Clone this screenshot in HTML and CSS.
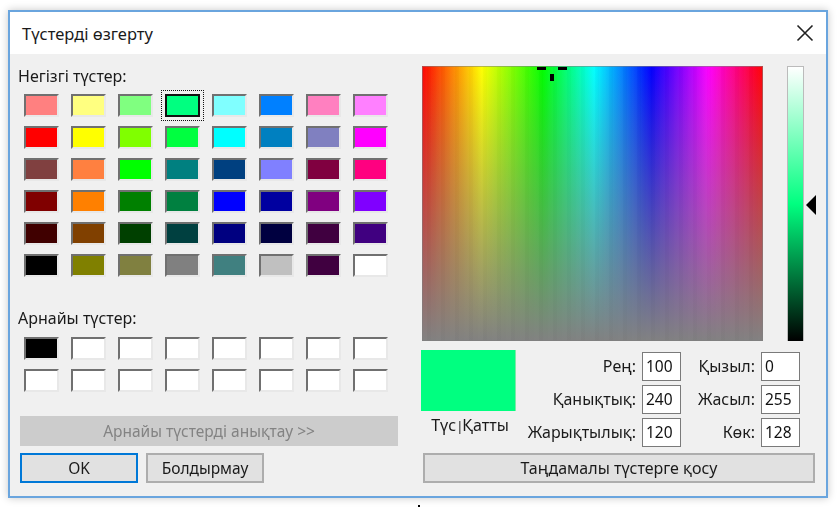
FILE: index.html
```html
<!DOCTYPE html>
<html lang="kk">
<head>
<meta charset="utf-8">
<title>Түстерді өзгерту</title>
<link rel="stylesheet" href="styles.css">
</head>
<body>
<div class="window">
  <header class="titlebar">
    <span class="title">Түстерді өзгерту</span>
    <svg class="close" width="18" height="18" viewBox="0 0 18 18"><path d="M1.5 1.5 16.5 16.5M16.5 1.5 1.5 16.5" stroke="#222" stroke-width="1.6" fill="none"/></svg>
  </header>
  <main class="content">
    <section class="left">
      <div class="label basic-label">Негізгі түстер:</div>
      <div class="swatches">
        <span class="sw" style="background:#ff8080"></span><span class="sw" style="background:#ffff80"></span><span class="sw" style="background:#80ff80"></span><span class="sw selected" style="background:#00ff80"></span><span class="sw" style="background:#80ffff"></span><span class="sw" style="background:#0080ff"></span><span class="sw" style="background:#ff80c0"></span><span class="sw" style="background:#ff80ff"></span>
        <span class="sw" style="background:#ff0000"></span><span class="sw" style="background:#ffff00"></span><span class="sw" style="background:#80ff00"></span><span class="sw" style="background:#00ff40"></span><span class="sw" style="background:#00ffff"></span><span class="sw" style="background:#0080c0"></span><span class="sw" style="background:#8080c0"></span><span class="sw" style="background:#ff00ff"></span>
        <span class="sw" style="background:#804040"></span><span class="sw" style="background:#ff8040"></span><span class="sw" style="background:#00ff00"></span><span class="sw" style="background:#008080"></span><span class="sw" style="background:#004080"></span><span class="sw" style="background:#8080ff"></span><span class="sw" style="background:#800040"></span><span class="sw" style="background:#ff0080"></span>
        <span class="sw" style="background:#800000"></span><span class="sw" style="background:#ff8000"></span><span class="sw" style="background:#008000"></span><span class="sw" style="background:#008040"></span><span class="sw" style="background:#0000ff"></span><span class="sw" style="background:#0000a0"></span><span class="sw" style="background:#800080"></span><span class="sw" style="background:#8000ff"></span>
        <span class="sw" style="background:#400000"></span><span class="sw" style="background:#804000"></span><span class="sw" style="background:#004000"></span><span class="sw" style="background:#004040"></span><span class="sw" style="background:#000080"></span><span class="sw" style="background:#000040"></span><span class="sw" style="background:#400040"></span><span class="sw" style="background:#400080"></span>
        <span class="sw" style="background:#000000"></span><span class="sw" style="background:#808000"></span><span class="sw" style="background:#808040"></span><span class="sw" style="background:#808080"></span><span class="sw" style="background:#408080"></span><span class="sw" style="background:#c0c0c0"></span><span class="sw" style="background:#400040"></span><span class="sw" style="background:#ffffff"></span>
      </div>
      <div class="label custom-label">Арнайы түстер:</div>
      <div class="swatches">
        <span class="sw" style="background:#000000"></span><span class="sw"></span><span class="sw"></span><span class="sw"></span><span class="sw"></span><span class="sw"></span><span class="sw"></span><span class="sw"></span>
        <span class="sw"></span><span class="sw"></span><span class="sw"></span><span class="sw"></span><span class="sw"></span><span class="sw"></span><span class="sw"></span><span class="sw"></span>
      </div>
      <button class="btn define" disabled>Арнайы түстерді анықтау &gt;&gt;</button>
      <div class="actions">
        <button class="btn ok">OK</button>
        <button class="btn cancel">Болдырмау</button>
      </div>
    </section>
    <section class="right">
      <div class="pickers">
        <div class="spectrum">
          <span class="cross c-left"></span><span class="cross c-right"></span><span class="cross c-down"></span>
        </div>
        <div class="lum"></div>
        <svg class="arrow" width="11" height="20" viewBox="0 0 11 20"><path d="M0 10 10 0V20Z" fill="#000"/></svg>
      </div>
      <div class="controls">
        <div class="preview-col">
          <div class="preview"></div>
          <div class="preview-label">Түс<span class="bar">|</span>Қатты</div>
        </div>
        <div class="fields">
          <label class="f-label">Рең:</label><span class="input">100</span>
          <label class="f-label">Қызыл:</label><span class="input">0</span>
          <label class="f-label">Қанықтық:</label><span class="input">240</span>
          <label class="f-label">Жасыл:</label><span class="input">255</span>
          <label class="f-label">Жарықтылық:</label><span class="input">120</span>
          <label class="f-label">Көк:</label><span class="input">128</span>
        </div>
      </div>
      <button class="btn add">Таңдамалы түстерге қосу</button>
    </section>
  </main>
</div>
<span class="speck"></span>
</body>
</html>
```

FILE: styles.css
```css
html, body {
  margin: 0;
  padding: 0;
  background: #fff;
}
body {
  width: 838px;
  height: 507px;
  overflow: hidden;
  padding: 10px 0 0 8px;
  box-sizing: border-box;
  font-family: "Noto Sans", sans-serif;
  color: #1a1a1a;
  position: relative;
}
.window {
  width: 820px;
  height: 488px;
  box-sizing: border-box;
  border: 2px solid #6aa5de;
  background: #f0f0f0;
  box-shadow: 0 0 8px rgba(0, 0, 0, .22);
  display: flex;
  flex-direction: column;
  filter: blur(.6px);
}
.titlebar {
  height: 42px;
  flex: none;
  background: #fff;
  display: flex;
  align-items: center;
  justify-content: space-between;
  padding: 0 12px 0 12px;
}
.title {
  font-size: 16.5px;
}
.content {
  flex: 1;
  display: flex;
  padding: 12px 0 0 10px;
  gap: 23px;
}
.left {
  width: 378px;
  display: flex;
  flex-direction: column;
}
.label {
  font-size: 16px;
  line-height: 20px;
  margin-left: -2px;
}
.basic-label {
  margin-bottom: 8px;
}
.custom-label {
  margin-top: 31px;
  margin-bottom: 9px;
}
.swatches {
  display: grid;
  grid-template-columns: repeat(8, 35px);
  grid-auto-rows: 23px;
  column-gap: 12px;
  row-gap: 9px;
  padding-left: 4px;
}
.sw {
  box-sizing: border-box;
  background: #fff;
  border: 2px solid;
  border-color: #707070 #e8e8e8 #e8e8e8 #707070;
  position: relative;
}
.selected {
  border: 2px solid #111;
  outline: 1px dotted #111;
  outline-offset: 3px;
  box-shadow: 0 0 0 3px #f0f0f0;
}
.btn {
  font-family: inherit;
  font-size: 15.5px;
  color: #1a1a1a;
  background: #e1e1e1;
  border: 2px solid #adadad;
  padding: 0;
  height: 30px;
  box-sizing: border-box;
}
.define {
  margin-top: 24px;
  width: 378px;
  background: #cccccc;
  border-color: #cccccc;
  color: #838383;
}
.actions {
  display: flex;
  gap: 8px;
  margin-top: 7px;
}
.ok, .cancel {
  width: 118px;
}
.ok {
  border-color: #0078d7;
}
.right {
  width: 396px;
  display: flex;
  flex-direction: column;
}
.pickers {
  display: flex;
  align-items: flex-start;
  padding-left: 1px;
  height: 275px;
}
.spectrum {
  width: 341px;
  height: 275px;
  flex: none;
  position: relative;
  box-shadow: inset 0 0 0 1px rgba(128, 128, 128, .55);
  background:
    repeating-linear-gradient(to right, rgba(255,255,255,.015) 0 5px, rgba(0,0,0,.012) 5px 9px, rgba(255,255,255,.008) 9px 14px),
    linear-gradient(to bottom, rgba(128,128,128,0), #808080),
    linear-gradient(to right, #ff0000, #ffff00 17.5%, #00ff00 35.5%, #00ffff 50.5%, #0000ff 67%, #ff00ff 84%, #ff0000);
}
.cross {
  position: absolute;
  background: #000;
}
.c-left {
  left: 115px;
  top: 1px;
  width: 9px;
  height: 3px;
}
.c-right {
  left: 136px;
  top: 1px;
  width: 9px;
  height: 3px;
}
.c-down {
  left: 128px;
  top: 8px;
  width: 4px;
  height: 7px;
}
.lum {
  width: 17px;
  height: 275px;
  flex: none;
  margin-left: 24px;
  background: linear-gradient(to bottom, #fff, #00ff80 50%, #000);
  border: 1px solid #bbb;
  border-width: 1px 1px 0;
  box-sizing: border-box;
}
.arrow {
  margin: 129px 0 0 2px;
  flex: none;
}
.controls {
  display: flex;
  margin-top: 9px;
  height: 97px;
}
.preview-col {
  width: 95px;
  flex: none;
}
.preview {
  height: 61px;
  background: #00ff80;
  border-right: 1px solid #80e8a8;
  box-sizing: border-box;
}
.preview-label {
  font-size: 16px;
  text-align: center;
  margin-top: 4px;
  line-height: 20px;
  padding-left: 3px;
}
.bar {
  font-size: 13px;
  letter-spacing: -2px;
  margin-right: 1px;
}
.fields {
  display: grid;
  grid-template-columns: 121px 39px 72px 39px;
  grid-auto-rows: 29px;
  column-gap: 4px;
  row-gap: 4px;
  margin-top: 2px;
  padding-left: 1px;
  height: 95px;
}
.f-label {
  font-size: 16px;
  text-align: right;
  line-height: 29px;
  white-space: nowrap;
  padding-right: 2px;
}
.input {
  box-sizing: border-box;
  width: 39px;
  border: 1px solid #7a7a7a;
  background: #fff;
  font-size: 15.5px;
  line-height: 27px;
  padding-left: 3px;
  color: #111;
}
.add {
  margin: 6px 0 0 2px;
  width: 392px;
  font-size: 16px;
}
.speck {
  position: absolute;
  left: 418px;
  top: 505px;
  width: 2px;
  height: 2px;
  background: #000;
}
```
